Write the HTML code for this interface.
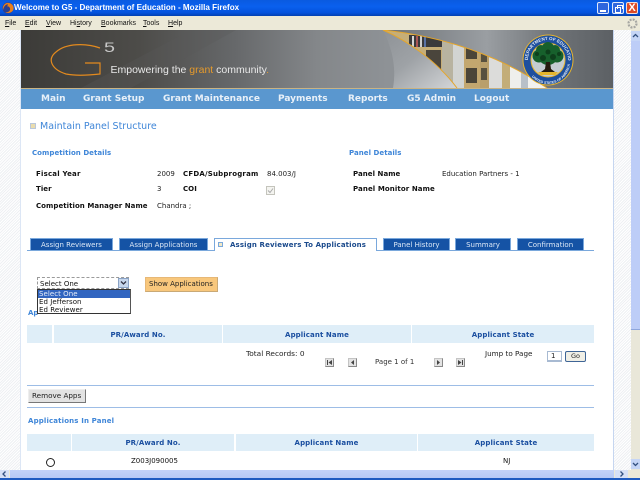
<!DOCTYPE html>
<html><head><meta charset="utf-8"><style>
html,body{margin:0;padding:0;width:640px;height:480px;overflow:hidden;background:#fff}
body{position:relative;font-family:"DejaVu Sans","Liberation Sans",sans-serif;font-size:7px;color:#222}
.a,.t{position:absolute;white-space:nowrap}
.t{line-height:10px}
.b{font-weight:bold;color:#111;letter-spacing:.05px}
.h{font-weight:bold;color:#3f86d8;font-size:7px;letter-spacing:.05px}
.nav{position:absolute;top:92px;line-height:14px;font-size:9px;font-weight:bold;color:#e8f0f8;white-space:nowrap}
.menu{position:absolute;top:18px;font-family:"Liberation Sans",sans-serif;font-size:7px;line-height:11px;color:#111}
.tab{position:absolute;top:238px;height:12px;background:#1553a5;border:1px solid #7aa8dc;border-bottom:0;box-sizing:border-box;color:#dce8f6;text-align:center;line-height:12px;font-size:7px;white-space:nowrap}
.th{position:absolute;background:#dfeef8;color:#1b4fa0;font-weight:bold;text-align:center;font-size:7px;letter-spacing:.1px;white-space:nowrap}
.pg{position:absolute;top:358px;width:9px;height:9px;background:#e3e3e3;border:1px solid #c4c4c4;border-right-color:#888;border-bottom-color:#888;box-sizing:border-box}
.pg svg{position:absolute;left:0;top:0}
.line{position:absolute;left:27px;width:567px;height:1px;background:#9dbde6}
.hatch{position:absolute;background:repeating-linear-gradient(135deg,#fff 0 1px,#eef0f3 1px 2px)}
.win{position:absolute;top:2px;width:12px;height:12px;box-sizing:border-box;background:#2f66dd;border:1px solid #dfe8fa;border-radius:2px}
</style></head><body>

<div class="a" style="left:0;top:0;width:640px;height:16px;background:linear-gradient(#0a5ae0,#0a60ee 40%,#0452dc 80%,#0340b0)"></div>
<svg class="a" style="left:1px;top:1px" width="14" height="14" viewBox="0 0 14 14"><circle cx="7" cy="7" r="5.6" fill="#2b3f8f"/><path d="M2 9c-1-4 2-8 6-7 3 .5 5 3 4.600 6-1 4-6 5-8.500 3 2 .5 5 0 5-3 0-2-2-3-3-2.500L7 3.500C5 3 3 5 2 9z" fill="#e8801c"/></svg>
<div class="t" style="left:14px;top:3px;font-family:'Liberation Sans',sans-serif;font-weight:bold;font-size:8.100px;color:#fff">Welcome to G5 - Department of Education - Mozilla Firefox</div>
<div class="win" style="left:597px"><div class="a" style="left:2px;top:7px;width:6px;height:2px;background:#fff"></div></div>
<div class="win" style="left:612px"><div class="a" style="left:2px;top:4px;width:4px;height:4px;border:1px solid #fff"></div><div class="a" style="left:4px;top:2px;width:4px;height:3px;border:1px solid #fff;border-bottom:0"></div></div>
<div class="win" style="left:626px;background:#dc4a26;border-color:#f2dcd5;color:#fff;font:bold 11px/10px 'Liberation Sans',sans-serif;text-align:center">X</div>

<div class="a" style="left:0;top:16px;width:640px;height:14px;background:#ece9d8"></div>
<div class="menu" style="left:5px"><u>F</u>ile</div>
<div class="menu" style="left:25px"><u>E</u>dit</div>
<div class="menu" style="left:46px"><u>V</u>iew</div>
<div class="menu" style="left:70px">Hi<u>s</u>tory</div>
<div class="menu" style="left:101px"><u>B</u>ookmarks</div>
<div class="menu" style="left:143px"><u>T</u>ools</div>
<div class="menu" style="left:168px"><u>H</u>elp</div>
<svg class="a" style="left:626px;top:17px" width="13" height="13" viewBox="0 0 13 13"><circle cx="6.500" cy="6.500" r="4" fill="none" stroke="#a6a6a2" stroke-width="2.200" stroke-dasharray="2 1.150"/></svg>

<div class="hatch" style="left:0;top:30px;width:20px;height:440px"></div>
<div class="a" style="left:20px;top:30px;width:1px;height:440px;background:#dce6f5"></div>
<div class="hatch" style="left:614px;top:30px;width:17px;height:440px"></div>
<div class="a" style="left:613px;top:30px;width:1px;height:440px;background:#c6d6f0"></div>

<svg class="a" style="left:21px;top:30px" width="592" height="58" viewBox="0 0 592 58">
<defs>
<linearGradient id="g1" x1="0" x2="1" y1="0" y2="0"><stop offset="0" stop-color="#3c3b38"/><stop offset=".2" stop-color="#4d4c49"/><stop offset=".36" stop-color="#66686a"/><stop offset=".5" stop-color="#84878a"/><stop offset=".62" stop-color="#8e9296"/><stop offset="1" stop-color="#8a8f94"/></linearGradient>
<linearGradient id="g2" x1="0" x2="1" y1="0" y2="0"><stop offset="0" stop-color="#6b7075"/><stop offset=".45" stop-color="#9a9ea2"/><stop offset=".75" stop-color="#6e7276"/><stop offset="1" stop-color="#5c6064"/></linearGradient>
<linearGradient id="g3" x1="0" x2="1" y1="0" y2="1"><stop offset="0" stop-color="#8e9296"/><stop offset=".45" stop-color="#9ea2a6"/><stop offset="1" stop-color="#d4d6d8"/></linearGradient>
<clipPath id="cp"><path d="M362 0C400 4 465 16 526 58H436C415 30 385 10 362 0z"/></clipPath>
<path id="ringTop" d="M507 30a20 20 0 0 1 40 0"/>
<path id="ringBot" d="M505 32a22 22 0 0 0 44 0"/>
</defs>
<rect width="592" height="58" fill="url(#g1)"/>
<path d="M170 0L60 58H110L215 0z" fill="#5a5a58" opacity=".3"/>
<path d="M362 0H592V58H526C465 16 400 4 362 0z" fill="url(#g2)"/>
<path d="M362 0C385 10 415 30 436 58H372C376 36 370 16 362 0z" fill="url(#g3)"/>
<g clip-path="url(#cp)">
<rect x="360" y="0" width="170" height="58" fill="#d8d8d2"/>
<rect x="360" y="0" width="62" height="58" fill="#c6ae78"/>
<rect x="388" y="5" width="33" height="12" fill="#3a3a3c"/>
<rect x="391" y="6" width="2" height="11" fill="#d5d5d5"/><rect x="395" y="6" width="2" height="11" fill="#a55"/><rect x="399" y="6" width="2" height="11" fill="#cfcfcf"/><rect x="403" y="6" width="2" height="11" fill="#5a73a6"/>
<rect x="405" y="20" width="15" height="20" fill="#4a453c"/>
<rect x="421" y="0" width="11" height="58" fill="#b8b3a0"/>
<rect x="432" y="0" width="11" height="58" fill="#d2d4d2"/>
<rect x="443" y="0" width="16" height="58" fill="#c3a76f"/>
<rect x="445" y="18" width="11" height="11" fill="#4b4538"/><rect x="445" y="38" width="11" height="15" fill="#4b4538"/>
<rect x="459" y="0" width="9" height="58" fill="#b99f6b"/>
<rect x="460" y="24" width="6" height="8" fill="#57503f"/><rect x="460" y="38" width="6" height="12" fill="#57503f"/>
<rect x="468" y="0" width="13" height="58" fill="#dcdcda"/>
<rect x="481" y="0" width="8" height="58" fill="#c3ad78"/>
<rect x="489" y="0" width="11" height="58" fill="#efefec"/>
<rect x="500" y="0" width="7" height="58" fill="#b8c0c8"/>
<rect x="507" y="0" width="20" height="58" fill="#f2f2ef"/>
</g>
<path d="M362 0C400 4 465 16 526 58" fill="none" stroke="#e5a62b" stroke-width="1"/>
<path d="M362 0C385 10 415 30 436 58" fill="none" stroke="#e5a62b" stroke-width="1"/>
<circle cx="527" cy="30" r="25.500" fill="#e8b42c"/>
<circle cx="527" cy="30" r="24.500" fill="#1d4f9e"/>
<circle cx="527" cy="30" r="17.500" fill="#e8b42c"/>
<circle cx="527" cy="30" r="16.500" fill="#c4ccd2"/>
<text font-family="Liberation Sans,sans-serif" font-size="4.500" font-weight="bold" fill="#e6ecf4"><textPath href="#ringTop" startOffset="0">DEPARTMENT OF EDUCATION</textPath></text>
<text font-family="Liberation Sans,sans-serif" font-size="3.500" font-weight="bold" fill="#e6ecf4"><textPath href="#ringBot" startOffset="16">UNITED STATES OF AMERICA</textPath></text>
<g fill="#17602c">
<circle cx="527" cy="25" r="10"/><circle cx="518" cy="26" r="6.500"/><circle cx="536" cy="26" r="6.500"/><circle cx="527" cy="18" r="6"/><circle cx="520" cy="20" r="5"/><circle cx="534" cy="20" r="5"/>
</g>
<g fill="#0e3f1c"><circle cx="522" cy="28" r="3"/><circle cx="532" cy="27" r="3"/><circle cx="527" cy="22" r="2.500"/><circle cx="516" cy="24" r="2"/><circle cx="538" cy="24" r="2"/></g>
<path d="M525 32h4l1 7 4 3h-14l4-3z" fill="#241a0e"/>
<path d="M517 42h20l-3 3h-14z" fill="#e4b52c"/>
<path d="M79 18C65 13 45 13 35 22C25 30 32 40 45 44C55 46 70 45 79 44V33H64" fill="none" stroke="#e38a1e" stroke-width="1.200"/>
<text x="83" y="22" font-family="Liberation Sans,sans-serif" font-size="14" fill="#c8c8c8" textLength="11" lengthAdjust="spacingAndGlyphs">5</text>
<text x="89.500" y="43" font-family="Liberation Sans,sans-serif" font-size="10.500" fill="#e8e8e8">Empowering the <tspan fill="#e59a2c">grant</tspan> community<tspan fill="#e59a2c">.</tspan></text>
</svg>

<div class="a" style="left:21px;top:88px;width:592px;height:21px;background:#5a97cf;border-top:1px solid #c9b384;box-sizing:border-box"></div>
<div class="nav" style="left:41px">Main</div>
<div class="nav" style="left:83px">Grant Setup</div>
<div class="nav" style="left:163px">Grant Maintenance</div>
<div class="nav" style="left:278px">Payments</div>
<div class="nav" style="left:348px">Reports</div>
<div class="nav" style="left:407px">G5 Admin</div>
<div class="nav" style="left:474px">Logout</div>

<div class="a" style="left:30px;top:123px;width:6px;height:6px;box-sizing:border-box;background:#e9dcae;border:1px solid #b9c7dc"></div>
<div class="t" style="left:40px;top:122px;font-size:9.500px;color:#3f86d8">Maintain Panel Structure</div>

<div class="t h" style="left:32px;top:148px">Competition Details</div>
<div class="t h" style="left:349px;top:148px">Panel Details</div>
<div class="t b" style="left:36px;top:169px;letter-spacing:.2px">Fiscal Year</div>
<div class="t" style="left:157px;top:169px">2009</div>
<div class="t b" style="left:183px;top:169px;letter-spacing:.2px">CFDA/Subprogram</div>
<div class="t" style="left:267px;top:169px">84.003/J</div>
<div class="t b" style="left:353px;top:169px">Panel Name</div>
<div class="t" style="left:442px;top:169px">Education Partners - 1</div>
<div class="t b" style="left:36px;top:184px">Tier</div>
<div class="t" style="left:157px;top:184px">3</div>
<div class="t b" style="left:183px;top:184px">COI</div>
<div class="a" style="left:266px;top:186px;width:9px;height:9px;border:1px solid #c4c4bc;background:#f4f4f0;box-sizing:border-box"><svg class="a" style="left:0;top:0" width="7" height="7" viewBox="0 0 7 7"><path d="M1 3.500L3 5.500 6 1.500" fill="none" stroke="#aaa" stroke-width="1"/></svg></div>
<div class="t b" style="left:353px;top:184px;letter-spacing:.1px">Panel Monitor Name</div>
<div class="t b" style="left:36px;top:201px">Competition Manager Name</div>
<div class="t" style="left:157px;top:201px">Chandra ;</div>

<div class="a" style="left:27px;top:250px;width:567px;height:1px;background:#7aa8dc"></div>
<div class="tab" style="left:30px;width:83px">Assign Reviewers</div>
<div class="tab" style="left:119px;width:89px">Assign Applications</div>
<div class="a" style="left:214px;top:238px;width:163px;height:13px;background:#fff;border:1px solid #7aa8dc;border-bottom:0;box-sizing:border-box"></div>
<div class="a" style="left:218px;top:242px;width:5px;height:5px;border:1px solid #7aa8dc;background:#f4e9c4;box-sizing:border-box"></div>
<div class="t" style="left:230px;top:240px;font-weight:bold;color:#1b4a8c;letter-spacing:.14px">Assign Reviewers To Applications</div>
<div class="tab" style="left:383px;width:67px">Panel History</div>
<div class="tab" style="left:455px;width:56px">Summary</div>
<div class="tab" style="left:517px;width:67px">Confirmation</div>

<div class="a" style="left:37px;top:277px;width:92px;height:12px;border:1px dashed #9a9a9a;box-sizing:border-box;background:#fff"></div>
<div class="t" style="left:40px;top:279px;color:#111">Select One</div>
<div class="a" style="left:118px;top:278px;width:11px;height:10px;background:#c6d6ec;border:1px solid #8aa3c6;box-sizing:border-box"><svg class="a" style="left:0;top:0" width="9" height="8" viewBox="0 0 9 8"><path d="M2 2.500L4.500 5 7 2.500" fill="none" stroke="#334" stroke-width="1.300"/></svg></div>
<div class="a" style="left:145px;top:277px;width:73px;height:15px;background:#f8c77c;border:1px solid #e7b877;border-right-color:#c9a976;border-bottom-color:#c9a976;box-sizing:border-box"></div>
<div class="t" style="left:149px;top:279px;color:#222">Show Applications</div>
<div class="t" style="left:28px;top:308px;font-weight:bold;color:#3f86d8">Ap</div>
<div class="a" style="left:37px;top:289px;width:94px;height:25px;background:#fff;border:1px solid #333;border-right:1px solid #555;box-sizing:border-box"></div>
<div class="a" style="left:38px;top:290px;width:92px;height:8px;background:#3165c0"></div>
<div class="t" style="left:39px;top:289px;color:#e8eef8;letter-spacing:.05px">Select One</div>
<div class="t" style="left:39px;top:297px;color:#111;letter-spacing:.05px">Ed Jefferson</div>
<div class="t" style="left:39px;top:305px;color:#111;letter-spacing:.05px">Ed Reviewer</div>

<div class="th" style="left:27px;top:325px;width:25px;height:18px"></div>
<div class="th" style="left:54px;top:325px;width:168px;height:18px;line-height:20px">PR/Award No.</div>
<div class="th" style="left:223px;top:325px;width:188px;height:18px;line-height:20px">Applicant Name</div>
<div class="th" style="left:412px;top:325px;width:182px;height:18px;line-height:20px">Applicant State</div>

<div class="t" style="left:246px;top:349px;color:#222;font-size:7.400px">Total Records: 0</div>
<div class="pg" style="left:325px"><svg width="7" height="7" viewBox="0 0 7 7"><path d="M1 1h1v5H1zM6 1v5L2.500 3.500z" fill="#444"/></svg></div>
<div class="pg" style="left:348px"><svg width="7" height="7" viewBox="0 0 7 7"><path d="M5 1v5L2 3.500z" fill="#444"/></svg></div>
<div class="t" style="left:375px;top:357px;color:#333">Page 1 of 1</div>
<div class="pg" style="left:434px"><svg width="7" height="7" viewBox="0 0 7 7"><path d="M2 1v5L5 3.500z" fill="#444"/></svg></div>
<div class="pg" style="left:456px"><svg width="7" height="7" viewBox="0 0 7 7"><path d="M5 1h1v5H5zM1 1v5L4.500 3.500z" fill="#444"/></svg></div>
<div class="t" style="left:485px;top:349px;color:#222;font-size:7.200px">Jump to Page</div>
<div class="a" style="left:547px;top:351px;width:15px;height:11px;border:1px solid #a8bad2;border-bottom-width:2px;box-sizing:border-box;line-height:9px;padding-left:3px">1</div>
<div class="a" style="left:565px;top:351px;width:21px;height:11px;border:1px solid #3f6596;border-radius:2px;background:#f0efe6;box-sizing:border-box;line-height:9px;text-align:center;font-size:6.500px">Go</div>

<div class="line" style="top:385px"></div>
<div class="a" style="left:28px;top:389px;width:58px;height:14px;background:#e2e2e2;border:1px solid #eee;border-right-color:#777;border-bottom-color:#777;box-sizing:border-box"></div>
<div class="t" style="left:32px;top:391px;color:#222;font-size:7.200px">Remove Apps</div>
<div class="line" style="top:407px"></div>

<div class="t h" style="left:28px;top:416px;letter-spacing:.15px">Applications In Panel</div>
<div class="th" style="left:27px;top:434px;width:44px;height:17px"></div>
<div class="th" style="left:72px;top:434px;width:162px;height:17px;line-height:18px">PR/Award No.</div>
<div class="th" style="left:236px;top:434px;width:181px;height:17px;line-height:18px">Applicant Name</div>
<div class="th" style="left:418px;top:434px;width:176px;height:17px;line-height:18px">Applicant State</div>
<div class="a" style="left:46px;top:458px;width:9px;height:9px;border:1px solid #222;border-radius:50%;background:#fff;box-sizing:border-box"></div>
<div class="t" style="left:131px;top:456px;font-size:7px;color:#111">Z003J090005</div>
<div class="t" style="left:503px;top:456px;font-size:7px;color:#111">NJ</div>

<div class="a" style="left:631px;top:30px;width:9px;height:440px;background:#e9e7d9"></div>
<div class="a" style="left:631px;top:31px;width:9px;height:10px;background:#c5d5f6"><svg class="a" style="left:0;top:0" width="9" height="10" viewBox="0 0 9 10"><path d="M2 6L4.500 3.500 7 6" fill="none" stroke="#33507f" stroke-width="1.300"/></svg></div>
<div class="a" style="left:631px;top:41px;width:9px;height:289px;background:#bdcdf7;border-bottom:1px solid #8ea6dc;box-sizing:border-box"></div>
<div class="a" style="left:631px;top:459px;width:9px;height:10px;background:#c5d5f6"><svg class="a" style="left:0;top:0" width="9" height="10" viewBox="0 0 9 10"><path d="M2 4L4.500 6.500 7 4" fill="none" stroke="#33507f" stroke-width="1.300"/></svg></div>

<div class="a" style="left:0;top:470px;width:640px;height:8px;background:#ece9d8"></div>
<div class="a" style="left:0;top:470px;width:9px;height:8px;background:#d6e0f6"><svg class="a" style="left:0;top:0" width="9" height="8" viewBox="0 0 9 8"><path d="M5.500 1.500L3 4 5.500 6.500" fill="none" stroke="#33507f" stroke-width="1.300"/></svg></div>
<div class="a" style="left:10px;top:470px;width:604px;height:8px;background:linear-gradient(#c4d3f8,#b7c9f5)"></div>
<div class="a" style="left:615px;top:470px;width:13px;height:8px;background:#d6e0f6"><svg class="a" style="left:0;top:0" width="13" height="8" viewBox="0 0 13 8"><path d="M5.500 1.500L8 4 5.500 6.500" fill="none" stroke="#33507f" stroke-width="1.300"/></svg></div>
<div class="a" style="left:0;top:478px;width:640px;height:2px;background:#1f5bc0"></div>
</body></html>
